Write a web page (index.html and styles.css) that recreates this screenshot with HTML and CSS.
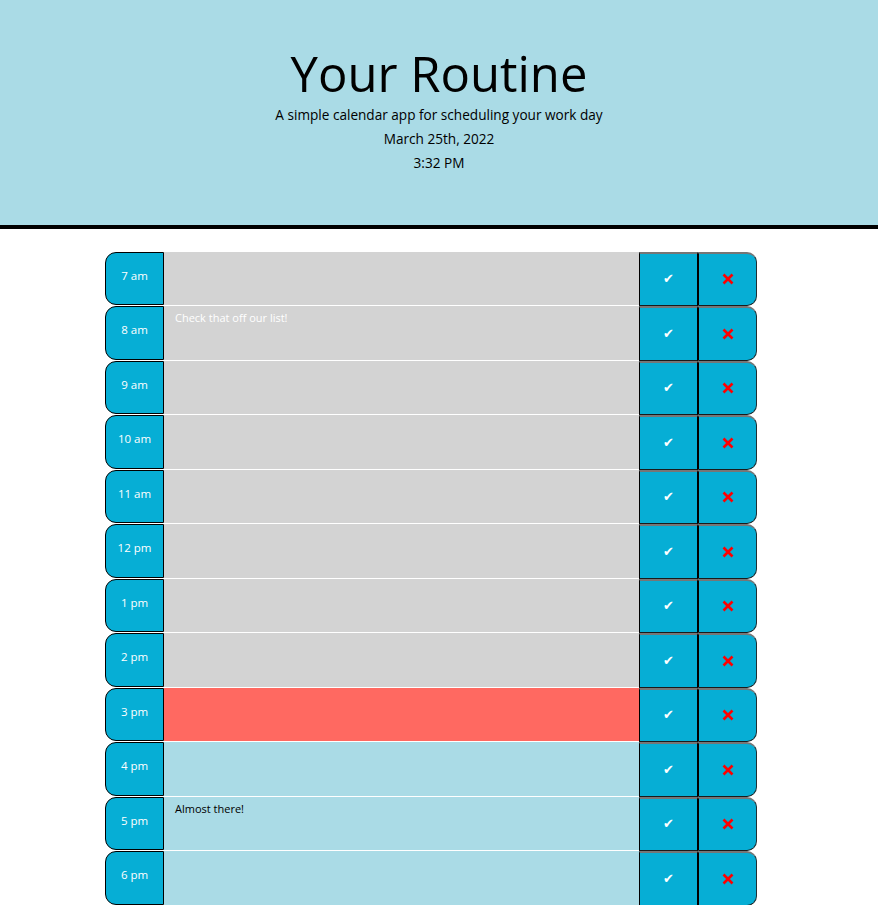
FILE: index.html
```html
<!DOCTYPE html>
<html lang="en">
<head>
<meta charset="utf-8">
<title>Your Routine</title>
<link rel="stylesheet" href="styles.css">
</head>
<body>
<header class="jumbotron">
  <h1 class="title">Your Routine</h1>
  <p class="lead">A simple calendar app for scheduling your work day</p>
  <p class="lead">March 25th, 2022</p>
  <p class="lead">3:32 PM</p>
</header>
<main class="container">
  <div class="row"><div class="hour">7 am</div><div class="desc past"></div><button class="save">✔</button><button class="del"><svg class="x" viewBox="0 0 12 12"><path d="M1.5 1.5L10.5 10.5M10.5 1.5L1.5 10.5"/></svg></button></div>
  <div class="row"><div class="hour">8 am</div><div class="desc past">Check that off our list!</div><button class="save">✔</button><button class="del"><svg class="x" viewBox="0 0 12 12"><path d="M1.5 1.5L10.5 10.5M10.5 1.5L1.5 10.5"/></svg></button></div>
  <div class="row"><div class="hour">9 am</div><div class="desc past"></div><button class="save">✔</button><button class="del"><svg class="x" viewBox="0 0 12 12"><path d="M1.5 1.5L10.5 10.5M10.5 1.5L1.5 10.5"/></svg></button></div>
  <div class="row"><div class="hour">10 am</div><div class="desc past"></div><button class="save">✔</button><button class="del"><svg class="x" viewBox="0 0 12 12"><path d="M1.5 1.5L10.5 10.5M10.5 1.5L1.5 10.5"/></svg></button></div>
  <div class="row"><div class="hour">11 am</div><div class="desc past"></div><button class="save">✔</button><button class="del"><svg class="x" viewBox="0 0 12 12"><path d="M1.5 1.5L10.5 10.5M10.5 1.5L1.5 10.5"/></svg></button></div>
  <div class="row"><div class="hour">12 pm</div><div class="desc past"></div><button class="save">✔</button><button class="del"><svg class="x" viewBox="0 0 12 12"><path d="M1.5 1.5L10.5 10.5M10.5 1.5L1.5 10.5"/></svg></button></div>
  <div class="row"><div class="hour">1 pm</div><div class="desc past"></div><button class="save">✔</button><button class="del"><svg class="x" viewBox="0 0 12 12"><path d="M1.5 1.5L10.5 10.5M10.5 1.5L1.5 10.5"/></svg></button></div>
  <div class="row"><div class="hour">2 pm</div><div class="desc past"></div><button class="save">✔</button><button class="del"><svg class="x" viewBox="0 0 12 12"><path d="M1.5 1.5L10.5 10.5M10.5 1.5L1.5 10.5"/></svg></button></div>
  <div class="row"><div class="hour">3 pm</div><div class="desc present"></div><button class="save">✔</button><button class="del"><svg class="x" viewBox="0 0 12 12"><path d="M1.5 1.5L10.5 10.5M10.5 1.5L1.5 10.5"/></svg></button></div>
  <div class="row"><div class="hour">4 pm</div><div class="desc future"></div><button class="save">✔</button><button class="del"><svg class="x" viewBox="0 0 12 12"><path d="M1.5 1.5L10.5 10.5M10.5 1.5L1.5 10.5"/></svg></button></div>
  <div class="row"><div class="hour">5 pm</div><div class="desc future">Almost there!</div><button class="save">✔</button><button class="del"><svg class="x" viewBox="0 0 12 12"><path d="M1.5 1.5L10.5 10.5M10.5 1.5L1.5 10.5"/></svg></button></div>
  <div class="row"><div class="hour">6 pm</div><div class="desc future"></div><button class="save">✔</button><button class="del"><svg class="x" viewBox="0 0 12 12"><path d="M1.5 1.5L10.5 10.5M10.5 1.5L1.5 10.5"/></svg></button></div>
</main>
</body>
</html>
```
FILE: styles.css
```css
html, body {
  margin: 0;
  padding: 0;
}
body {
  font-family: "Open Sans", "DejaVu Sans", sans-serif;
  background: #fff;
  color: #000;
}
.jumbotron {
  background: #aadbe6;
  border-bottom: 4px solid #000;
  text-align: center;
  padding: 45px 0 50px;
}
.title {
  margin: 0;
  font-size: 49px;
  font-weight: 400;
  line-height: 57.6px;
}
.lead {
  margin: 0;
  font-size: 13.6px;
  line-height: 24px;
}
.container {
  margin: 23px 0 0 105px;
  width: 652px;
  display: flex;
  flex-direction: column;
}
.row {
  display: flex;
  height: 54.5px;
}
.hour {
  width: 59px;
  flex: none;
  box-sizing: border-box;
  border: 1px solid #000;
  border-radius: 11px 0 0 11px;
  background: #06aed5;
  color: #fff;
  font-size: 11.5px;
  display: flex;
  align-items: center;
  justify-content: center;
  padding-bottom: 6px;
  margin: 0 0 1px 0;
}
.desc {
  flex: 1;
  border-bottom: 1px solid #fff;
  padding: 4px 11px;
  font-size: 11px;
  line-height: 15px;
}
.past { background: #d3d3d3; color: #fff; }
.present { background: #ff6961; color: #fff; }
.future { background: #aadbe6; color: #000; }
.save, .del {
  flex: none;
  width: 59px;
  margin: 0;
  padding: 0;
  background: #06aed5;
  font-family: "DejaVu Sans", sans-serif;
  font-size: 13px;
  border-style: solid;
  border-width: 2px 1px 1px 1px;
  border-color: #767676 #000 #1a1a1a #000;
  cursor: pointer;
  display: flex;
  align-items: center;
  justify-content: center;
}
.save {
  color: #fff;
  padding-bottom: 1px;
}
.del {
  border-right-color: #1f2f33;
  border-radius: 0 10px 10px 0;
}
.x {
  width: 12px;
  height: 12px;
  fill: none;
  stroke: #f00;
  stroke-width: 2.6;
}
```
